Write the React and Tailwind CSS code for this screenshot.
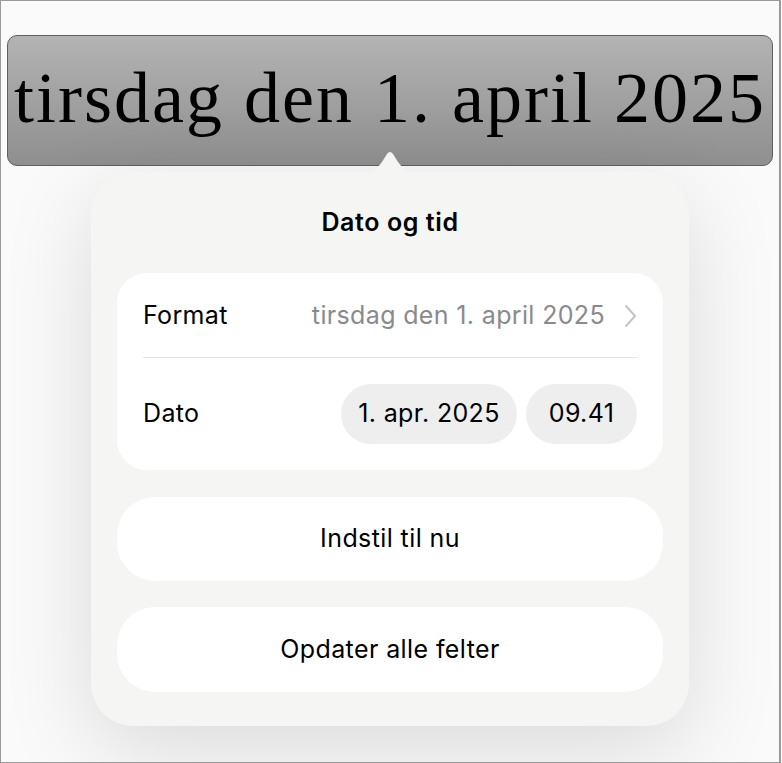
import React from "react";

const sans = { fontFamily: "Inter, 'Noto Sans', sans-serif" };

const Chevron = () => (
  <svg width="13" height="24" viewBox="0 0 13 24" fill="none" className="shrink-0">
    <path d="M2 2l9 10-9 10" stroke="#c4c4c7" strokeWidth="2" strokeLinecap="round" strokeLinejoin="round" />
  </svg>
);

const Pill = ({ children, width }) => (
  <div className={`h-[60px] ${width} rounded-full bg-[#eeeeef] flex items-center justify-center text-[25px] tracking-[0.35px] text-black`}>
    {children}
  </div>
);

const ActionButton = ({ label, height }) => (
  <button className={`w-full ${height} rounded-[38px] bg-white flex items-center justify-center text-[25px] tracking-[0.4px] text-black`}>
    {label}
  </button>
);

const App = () => {
  return (
    <div className="w-[782px] h-[763px] bg-white">
      <div className="w-[781px] h-[763px] border border-[#9a9a9a] border-r-2 bg-[#fafafa] overflow-hidden flex flex-col items-center">
        {/* the selected date field */}
        <div className="mt-[34px] w-[766px] h-[131px] rounded-[10px] border border-[#5f5f5f] bg-gradient-to-b from-[#b3b3b3] to-[#8f8f8f] flex items-center justify-center overflow-hidden">
          <span
            className="text-[72px] leading-none text-black whitespace-nowrap tracking-[2px] -mt-[5px]"
            style={{ fontFamily: "'Liberation Serif', 'DejaVu Serif', serif" }}
          >
            tirsdag den 1. april 2025
          </span>
        </div>

        {/* popover */}
        <div
          className="relative mt-[6px] w-[598px] h-[554px] rounded-[42px] bg-[#f5f5f4] shadow-[0_24px_90px_rgba(0,0,0,0.13)] px-[26px] flex flex-col"
          style={sans}
        >
          <svg
            className="absolute left-1/2 -translate-x-1/2 -top-[22px]"
            width="60"
            height="23"
            viewBox="0 0 60 23"
          >
            <path d="M0 23 C12 23 15 21 22 12 L27 4 Q30 0 33 4 L38 12 C45 21 48 23 60 23 Z" fill="#f5f5f4" />
          </svg>

          <h2 className="pt-[36px] h-[64px] leading-[28px] text-center text-[25px] font-semibold text-black tracking-[0.6px]">
            Dato og tid
          </h2>

          <div className="mt-[37px] rounded-[30px] bg-white px-[26px]">
            <div className="h-[85px] flex items-center justify-between border-b border-[#e2e2e4] pt-[2px]">
              <span className="text-[25px] tracking-[0.35px] text-black">Format</span>
              <div className="flex items-center gap-[19px]">
                <span className="text-[25px] tracking-[0.35px] text-[#8a8a8e]">tirsdag den 1. april 2025</span>
                <Chevron />
              </div>
            </div>
            <div className="h-[112px] flex items-center justify-between">
              <span className="text-[25px] tracking-[0.35px] text-black">Dato</span>
              <div className="flex items-center gap-[9px]">
                <Pill width="w-[176px]">1. apr. 2025</Pill>
                <Pill width="w-[111px]">09.41</Pill>
              </div>
            </div>
          </div>

          <div className="mt-[27px] flex flex-col gap-[26px]">
            <ActionButton label="Indstil til nu" height="h-[84px]" />
            <ActionButton label="Opdater alle felter" height="h-[85px]" />
          </div>
        </div>
      </div>
    </div>
  );
};

export default App;
